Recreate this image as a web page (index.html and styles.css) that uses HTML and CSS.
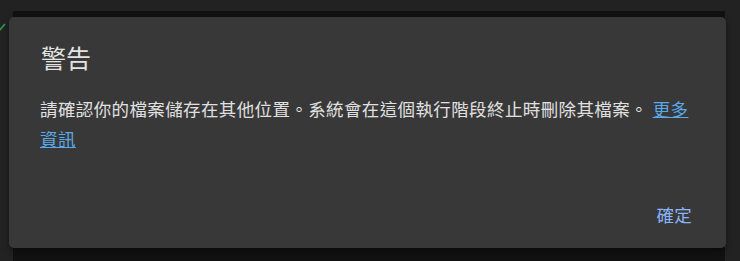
FILE: index.html
```html
<!DOCTYPE html>
<html lang="zh-Hant">
<head>
<meta charset="utf-8">
<link rel="stylesheet" href="styles.css">
</head>
<body>
<div class="page">
  <svg class="check" width="8" height="12" viewBox="0 0 8 12"><path d="M0 10 L6 3" stroke="#2e9e4a" stroke-width="1.6" fill="none"/></svg>
  <div class="panel"></div>
  <div class="dialog" role="dialog">
    <h2 class="title">警告</h2>
    <p class="body">請確認你的檔案儲存在其他位置。系統會在這個執行階段終止時刪除其檔案。 <a class="link" href="#">更多資訊</a></p>
    <div class="actions"><button class="btn">確定</button></div>
  </div>
</div>
</body>
</html>
```
FILE: styles.css
```css
html, body {
  margin: 0;
  padding: 0;
  background: #222222;
  width: 740px;
  height: 261px;
  overflow: hidden;
  font-family: Roboto, "Noto Sans CJK TC", sans-serif;
}
.page {
  position: relative;
  width: 740px;
  height: 261px;
  padding-top: 11px;
  box-sizing: border-box;
}
.check {
  position: absolute;
  left: -1px;
  top: 21px;
}
.panel {
  margin-left: 13px;
  width: 712px;
  height: 250px;
  background: #111111;
}
.dialog {
  position: absolute;
  left: 9px;
  top: 17px;
  width: 717px;
  height: 231px;
  box-sizing: border-box;
  background: #383838;
  border-radius: 5px;
  padding: 26px 31px 0 31px;
  display: flex;
  flex-direction: column;
  box-shadow: 0 2px 6px rgba(0,0,0,0.4);
}
.title {
  margin: 0 0 0 1px;
  font-size: 25px;
  line-height: 34px;
  font-weight: 400;
  color: #e3e3e3;
}
.body {
  margin: 18px 0 0 0;
  font-size: 17.5px;
  line-height: 30px;
  letter-spacing: 0.38px;
  color: #e0e0e0;
}
.link {
  color: #5ba9ea;
  text-decoration: underline;
}
.actions {
  display: flex;
  justify-content: flex-end;
  margin-top: auto;
  padding-bottom: 17px;
}
.btn {
  background: none;
  border: none;
  padding: 0 3px;
  font-family: inherit;
  font-size: 17.5px;
  line-height: 30px;
  color: #8ab4f8;
  letter-spacing: 0.3px;
}
```
